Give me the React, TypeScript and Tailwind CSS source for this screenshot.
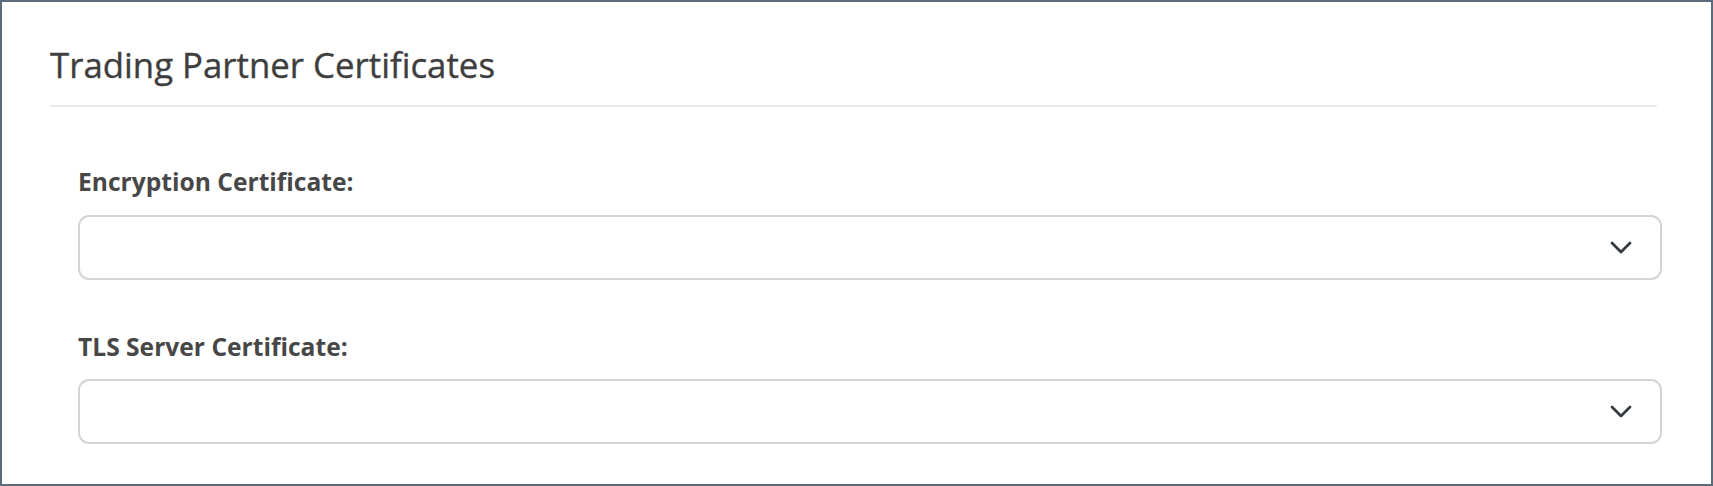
function Chevron() {
  return (
    <svg width="22" height="13" viewBox="0 0 22 13" fill="none" className="text-[#343a40]">
      <polyline
        points="2,2 11,11 20,2"
        stroke="currentColor"
        strokeWidth="2.8"
        strokeLinecap="round"
        strokeLinejoin="round"
      />
    </svg>
  );
}

function CertSelect({ label, id }: { label: string; id: string }) {
  return (
    <div className="flex flex-col">
      <label
        htmlFor={id}
        className="font-bold text-[24.6px] leading-[37.5px] text-[#474747]"
      >
        {label}
      </label>
      <div
        id={id}
        className="mt-[14px] h-[65px] flex items-center justify-end rounded-[11px] border-2 border-[#d4d4d4] bg-white pr-[28px]"
      >
        <Chevron />
      </div>
    </div>
  );
}

export default function App() {
  return (
    <div className="w-full h-[486px] border-2 border-[#5b6b7b] bg-white overflow-hidden font-['Open_Sans','Liberation_Sans',sans-serif]">
      {/* header */}
      <div className="ml-[48px] mr-[54px] pt-[41px] pb-[18px] border-b-2 border-[#ebebeb]">
        <h2 className="text-[34.8px] leading-[44px] font-normal text-[#3e3e3e] [-webkit-text-stroke:0.35px_#3e3e3e]">
          Trading Partner Certificates
        </h2>
      </div>

      {/* form */}
      <div className="pl-[76px] pr-[49px] pt-[56px] flex flex-col gap-[48px]">
        <CertSelect label="Encryption Certificate:" id="enc-cert" />
        <CertSelect label="TLS Server Certificate:" id="tls-cert" />
      </div>
    </div>
  );
}
